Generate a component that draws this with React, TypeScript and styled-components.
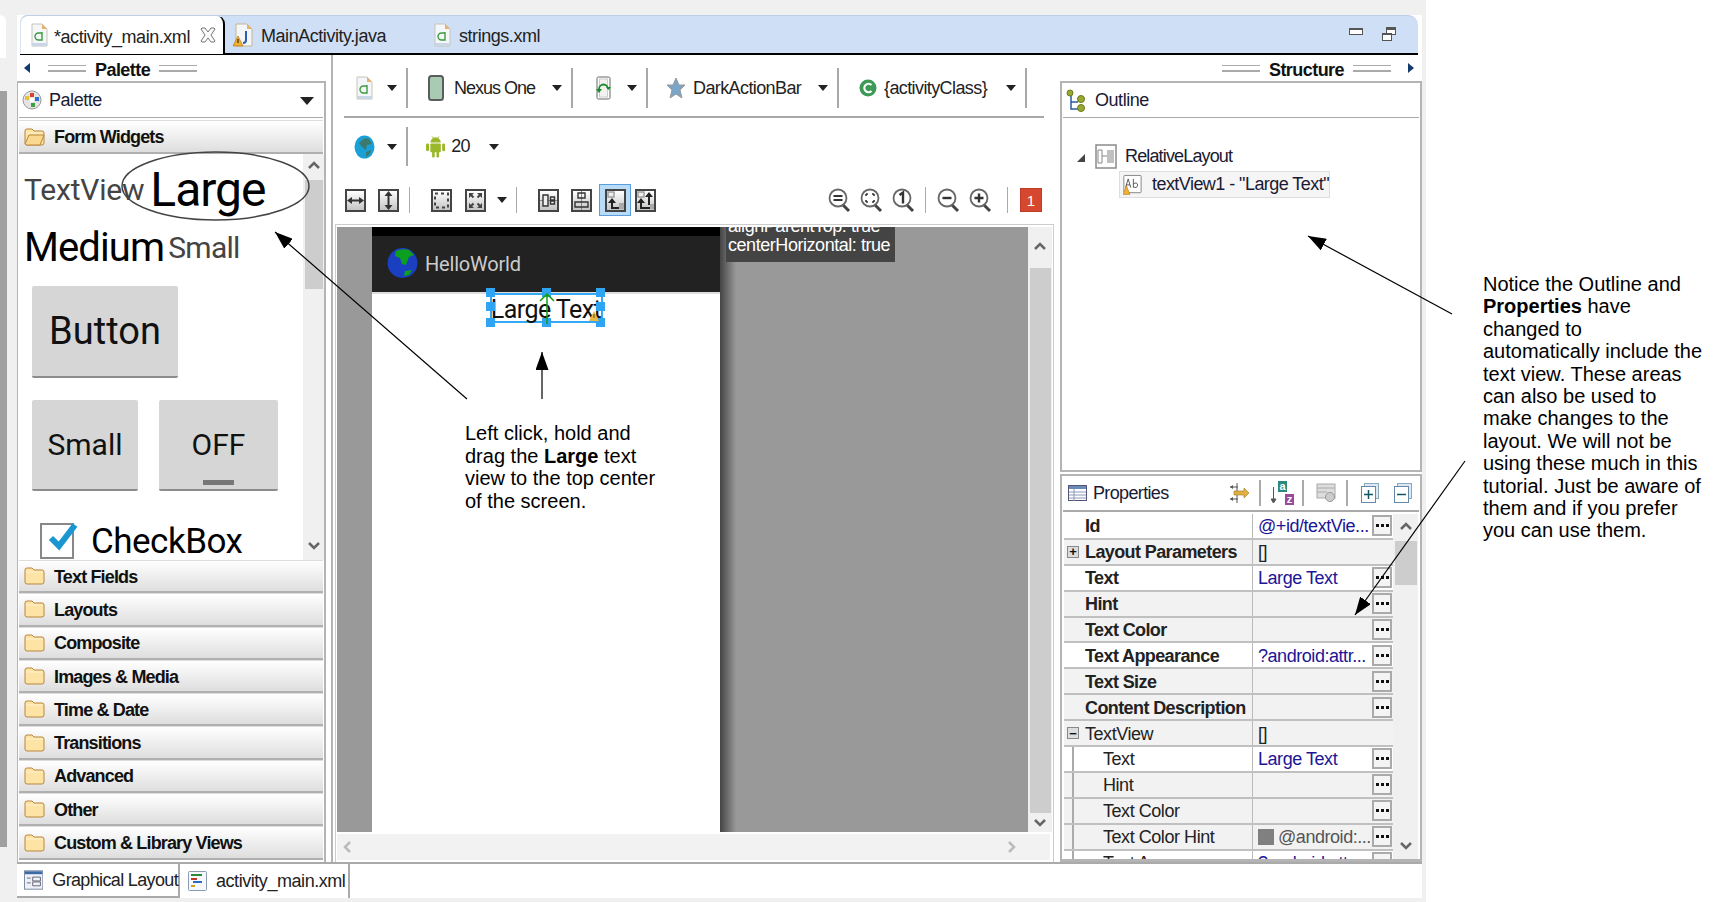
import React from 'react';
import styled, { createGlobalStyle, css } from 'styled-components';

const sections = ['Text Fields', 'Layouts', 'Composite', 'Images & Media', 'Time & Date', 'Transitions', 'Advanced', 'Other', 'Custom & Library Views'];

type Prop = {
  name: string;
  value?: string;
  bold?: boolean;
  nested?: boolean;
  white?: boolean;
  expander?: '+' | '-';
  noButton?: boolean;
  swatch?: boolean;
  plain?: boolean;
};

const properties: Prop[] = [
  { name: 'Id', value: '@+id/textVie...', bold: true, white: true },
  { name: 'Layout Parameters', value: '[]', bold: true, expander: '+', noButton: true, plain: true },
  { name: 'Text', value: 'Large Text', bold: true, white: true },
  { name: 'Hint', bold: true },
  { name: 'Text Color', bold: true },
  { name: 'Text Appearance', value: '?android:attr...', bold: true, white: true },
  { name: 'Text Size', bold: true },
  { name: 'Content Description', bold: true },
  { name: 'TextView', value: '[]', expander: '-', noButton: true, plain: true },
  { name: 'Text', value: 'Large Text', nested: true, white: true },
  { name: 'Hint', nested: true },
  { name: 'Text Color', nested: true },
  { name: 'Text Color Hint', value: '@android:...', nested: true, swatch: true },
  { name: 'Text Appearance', value: '?android:attr...', nested: true, white: true },
];

function XmlFileIcon() {
  return (
    <svg width="17" height="24" viewBox="0 0 17 24">
      <path d="M1 1h10l5 5v17H1z" fill="#f4f7fa" stroke="#c8c4b4" />
      <path d="M11 1l5 5h-5z" fill="#e9b070" />
      <path d="M1 20h15v3H1z" fill="#c9d6e6" />
      <path d="M11 10H7.5a3 3 0 0 0 0 7H11V9" fill="none" stroke="#3d9a3d" strokeWidth="1.4" />
    </svg>
  );
}

function JavaFileIcon() {
  return (
    <svg width="20" height="24" viewBox="0 0 20 24">
      <path d="M3 1h11l5 5v17H3z" fill="#f4f7fa" stroke="#c8b48a" />
      <path d="M14 1l5 5h-5z" fill="#e9b070" />
      <path d="M13 8v9q0 3-3 3" fill="none" stroke="#2a5fb0" strokeWidth="2" />
      <path d="M5 13l5 10H0z" fill="#f0b030" stroke="#b87820" strokeWidth=".7" />
      <path d="M5 16v4" stroke="#5a3a10" strokeWidth="1.4" />
    </svg>
  );
}

function CloseIcon() {
  return (
    <svg width="16" height="16" viewBox="0 0 16 16">
      <path d="M2 1h3l3 4 3-4h3l1 1-4 6 4 6-1 1h-3l-3-4-3 4H2l-1-1 4-6-4-6z" fill="#fafafa" stroke="#777" />
    </svg>
  );
}

function RestoreIcon() {
  return (
    <svg width="14" height="14" viewBox="0 0 14 14">
      <rect x="4.500" y=".5" width="9" height="7" fill="#fff" stroke="#555" />
      <path d="M4 1h10v2H4z" fill="#555" />
      <rect x=".5" y="6.500" width="9" height="7" fill="#fff" stroke="#555" />
      <path d="M0 6h10v2H0z" fill="#555" />
    </svg>
  );
}

function PaletteIcon() {
  return (
    <svg width="20" height="20" viewBox="0 0 20 20">
      <circle cx="10" cy="10" r="9" fill="#e4e4e4" stroke="#999" />
      <rect x="3" y="6" width="4" height="4" fill="#e8c040" />
      <rect x="8" y="3" width="4" height="4" fill="#d84030" />
      <rect x="13" y="7" width="4" height="4" fill="#3070d0" />
      <rect x="9" y="13" width="4" height="4" fill="#40a040" />
      <rect x="8" y="8" width="4" height="4" fill="#fff" />
    </svg>
  );
}

function FolderIcon({ open }: { open?: boolean }) {
  return (
    <svg width="21" height="18" viewBox="0 0 21 18">
      <path d="M1 3q0-2 2-2h5l2 2h8q2 0 2 2v10q0 2-2 2H3q-2 0-2-2z" fill="#fde3a4" stroke="#b9853c" />
      <path d="M2 5h17" stroke="#fff3cf" />
      {open && <path d="M1 16l4-9h15l-4 10H2z" fill="#fbd890" stroke="#b9853c" />}
    </svg>
  );
}

function PhoneIcon() {
  return (
    <svg width="16" height="26" viewBox="0 0 16 26">
      <rect x="1" y="1" width="14" height="24" rx="2.500" fill="#a8cbb4" stroke="#5c5c5c" strokeWidth="2" />
    </svg>
  );
}

function RotateIcon() {
  return (
    <svg width="15" height="24" viewBox="0 0 15 24">
      <rect x="1" y="1" width="13" height="22" rx="1.500" fill="#fff" stroke="#666" />
      <rect x="3.500" y="3" width="8" height="18" fill="#f2f2f2" stroke="#ccc" />
      <path d="M3 13a4.500 4.500 0 0 1 9 0" fill="none" stroke="#1a8a2a" strokeWidth="1.800" />
      <path d="M0 13h6l-3 4zM10 11h5l-2.500 3z" fill="#1a8a2a" />
    </svg>
  );
}

function StarIcon() {
  return (
    <svg width="20" height="22" viewBox="0 0 20 22">
      <path d="M10 1l3 7h6l-5 5 2 8-6-4-6 4 2-8-5-5h6z" fill="#7ba6c8" stroke="#999" />
    </svg>
  );
}

function ClassIcon() {
  return (
    <svg width="18" height="20" viewBox="0 0 18 20">
      <circle cx="9" cy="10" r="8.500" fill="#3c9a55" />
      <path d="M12.500 7a4.200 4.200 0 1 0 0 6" fill="none" stroke="#fff" strokeWidth="2.200" />
    </svg>
  );
}

function ToolGlobe() {
  return (
    <svg width="21" height="24" viewBox="0 0 21 24">
      <ellipse cx="10.500" cy="12" rx="10" ry="11.500" fill="#1aa0d8" />
      <path d="M8 5q4-3 7-1l3 5-5 1-1 5-4-3-3-4zM12 17l5-2-1 4-4 3z" fill="#3c7a70" />
    </svg>
  );
}

function AndroidIcon() {
  return (
    <svg width="22" height="25" viewBox="0 0 22 25">
      <g fill="#9ab82a">
        <path d="M5 8a6 6 0 0 1 12 0z" />
        <path d="M7 1l2 3M15 1l-2 3" stroke="#9ab82a" />
        <rect x="5" y="9" width="12" height="10" rx="1" />
        <rect x="0" y="9" width="3.500" height="9" rx="1.700" />
        <rect x="18.500" y="9" width="3.500" height="9" rx="1.700" />
        <rect x="7" y="18" width="3" height="7" rx="1.400" />
        <rect x="12" y="18" width="3" height="7" rx="1.400" />
      </g>
    </svg>
  );
}

function WorldIcon() {
  return (
    <svg width="31" height="32" viewBox="0 0 31 32">
      <circle cx="15.500" cy="16" r="15" fill="#1a3fc0" />
      <path d="M9 4q6-3 13-1l5 5-5 2-3 8-4-1-2-6-5-2zM18 24l7-1-3 5-5 1z" fill="#0da020" />
    </svg>
  );
}

function FrameGlyph({ kind }: { kind: string }) {
  const s = '#333';
  return (
    <svg width="17" height="19" viewBox="0 0 17 19">
      {kind === 'h' && <path d="M4 9.500h9" stroke={s} strokeWidth="2" />}
      {kind === 'h' && <path d="M0 9.500l5-3.500v7zM17 9.500l-5-3.500v7z" fill={s} />}
      {kind === 'v' && <path d="M8.500 4v11" stroke={s} strokeWidth="2" />}
      {kind === 'v' && <path d="M8.500 0l-4 5h8zM8.500 19l-4-5h8z" fill={s} />}
      {kind === 'dots' && <rect x="2" y="2.500" width="13" height="14" fill="none" stroke="#444" strokeWidth="2" strokeDasharray="3 3" />}
      {kind === 'fit' && <path d="M3 3l3.500 3.500M14 3l-3.500 3.500M3 16l3.500-3.500M14 16l-3.500-3.500" fill="none" stroke="#444" strokeWidth="2" />}
      {kind === 'fit' && <path d="M2 2h5l-5 5zM15 2h-5l5 5zM2 17h5l-5-5zM15 17h-5l5-5z" fill="#444" />}
      {kind === 'row' && <path d="M0 9.500h17" stroke="#888" />}
      {kind === 'row' && <path d="M3 4h5v11H3zM10.500 6h4v3h-4zM10.500 10h4v3h-4z" fill="#eee" stroke="#333" strokeWidth="1.400" />}
      {kind === 'col' && <path d="M8.500 0v19" stroke="#888" />}
      {kind === 'col' && <path d="M5 2h7v5H5zM2 11h13v5H2z" fill="none" stroke="#333" strokeWidth="1.400" />}
      {kind === 'up' && (
        <>
          <rect x="1" y="1" width="6" height="5" fill="#eee" stroke="#999" strokeWidth="1.400" />
          <path d="M5 10v7h8" fill="none" stroke="#222" strokeWidth="2" />
          <path d="M1 12l4-5 4 5z" fill="#222" />
          <rect x="12" y="12" width="5" height="6" fill="#aaa" />
        </>
      )}
      {kind === 'upb' && (
        <>
          <rect x="1" y="1" width="6" height="5" fill="#eee" stroke="#999" strokeWidth="1.400" />
          <path d="M4 11v6h9M12 5v9" fill="none" stroke="#222" strokeWidth="2" />
          <path d="M0 12l4-5 4 5zM8 6l4-5 4 5z" fill="#222" />
          <rect x="13" y="13" width="4" height="5" fill="#aaa" />
        </>
      )}
    </svg>
  );
}

function Magnifier({ glyph }: { glyph: string }) {
  return (
    <svg width="23" height="25" viewBox="0 0 23 25">
      <path d="M15 17l6 6" stroke="#444" strokeWidth="3" />
      <circle cx="10" cy="10" r="8.500" fill="#fff" stroke="#666" strokeWidth="1.800" />
      {glyph === 'eq' && <path d="M5.500 8h9M5.500 12h9" stroke="#333" strokeWidth="2.200" />}
      {glyph === 'fit' && <path d="M6 6h2M12 6h2M6 14h2M12 14h2M6 6v2M14 6v2M6 14v-2M14 14v-2" stroke="#333" strokeWidth="1.600" />}
      {glyph === 'one' && <path d="M7.500 7l3.500-2.500v11" fill="none" stroke="#333" strokeWidth="2.400" />}
      {glyph === 'minus' && <path d="M5.500 10h9" stroke="#333" strokeWidth="2.400" />}
      {glyph === 'plus' && <path d="M5.500 10h9M10 5.500v9" stroke="#333" strokeWidth="2.400" />}
    </svg>
  );
}

function OutlineIcon() {
  return (
    <svg width="20" height="24" viewBox="0 0 20 24">
      <path d="M5 8v13h7M5 14h7" fill="none" stroke="#2a5a9a" strokeWidth="1.500" />
      <g fill="#9aa832" stroke="#6a7a18">
        <circle cx="4" cy="5" r="3" />
        <circle cx="15" cy="11" r="3.500" />
        <circle cx="15" cy="20" r="3.500" />
      </g>
    </svg>
  );
}

function LayoutIcon() {
  return (
    <svg width="22" height="25" viewBox="0 0 22 25">
      <rect x="1" y="1" width="20" height="23" fill="#fff" stroke="#8a8a8a" strokeWidth="1.500" />
      <path d="M3 6h4v13H3zM7 12h5" fill="none" stroke="#888" />
      <rect x="12" y="6" width="7" height="13" fill="#c0c0c0" />
    </svg>
  );
}

function TextViewIcon() {
  return (
    <svg width="22" height="25" viewBox="0 0 22 25">
      <rect x="1" y="2" width="20" height="20" rx="1" fill="#fff" stroke="#777" />
      <path d="M3 16l3-10 3 10M4 13h4M12 6v10M12 12q4-3 5 1-1 5-5 2" fill="none" stroke="#444" />
      <path d="M4 14l4 10H0z" fill="#f0b030" stroke="#b87820" strokeWidth=".7" />
    </svg>
  );
}

function WarnIcon() {
  return (
    <svg width="10" height="10" viewBox="0 0 10 10">
      <path d="M5 0l5 10H0z" fill="#e8b840" />
      <path d="M5 3v4" stroke="#553" />
    </svg>
  );
}

function TableIcon() {
  return (
    <svg width="19" height="16" viewBox="0 0 19 16">
      <rect x=".5" y=".5" width="18" height="15" fill="#fff" stroke="#557" />
      <path d="M1 1h17v3H1z" fill="#6a8ab8" />
      <path d="M1 7h17M1 10h17M1 13h17M6 4v12" stroke="#8a9ab8" />
    </svg>
  );
}

function FilterIcon() {
  return (
    <svg width="21" height="22" viewBox="0 0 21 22">
      <path d="M1 5h8M1 17h8M8 1v8M8 13v8" stroke="#555" />
      <path d="M1 5l3-2v4zM1 17l3-2v4z" fill="#555" />
      <path d="M5 9h10V6l5 5-5 5v-3H5z" fill="#e0b040" stroke="#a07820" strokeWidth=".6" />
    </svg>
  );
}

function SortIcon() {
  return (
    <svg width="23" height="24" viewBox="0 0 23 24">
      <path d="M2.500 6v15M2.500 22l-2.500-4h5z" stroke="#555" fill="#555" />
      <rect x="7" y="0" width="9" height="11" fill="#2a8a80" />
      <rect x="14" y="13" width="9" height="11" fill="#9a4a9a" />
      <text x="11.500" y="9" textAnchor="middle" fontFamily="Liberation Sans" fontWeight="bold" fontSize="11" fill="#fff">a</text>
      <text x="18.500" y="22" textAnchor="middle" fontFamily="Liberation Sans" fontWeight="bold" fontSize="11" fill="#fff">z</text>
    </svg>
  );
}

function AdvancedIcon() {
  return (
    <svg width="20" height="20" viewBox="0 0 20 20">
      <rect x="1" y="1" width="18" height="14" fill="#ddd" stroke="#aaa" />
      <path d="M1 5h18M1 9h10" stroke="#aaa" />
      <circle cx="14" cy="14" r="4.500" fill="#ccc" stroke="#999" />
    </svg>
  );
}

function CollapseIcon({ plus }: { plus?: boolean }) {
  return (
    <svg width="18" height="20" viewBox="0 0 18 20">
      <rect x="3.500" y=".5" width="14" height="15" fill="#dce8f4" stroke="#8ab" />
      <rect x=".5" y="3.500" width="14" height="16" fill="#fff" stroke="#68a" />
      <path d="M3 11.500h9" stroke="#156" strokeWidth="1.500" />
      {plus && <path d="M7.500 7v9" stroke="#156" strokeWidth="1.500" />}
    </svg>
  );
}

function GraphicalIcon() {
  return (
    <svg width="20" height="20" viewBox="0 0 20 20">
      <rect x=".5" y=".5" width="19" height="19" fill="#eef2f8" stroke="#7a8aa0" />
      <path d="M1 1h18v3H1z" fill="#3a6aa8" />
      <path d="M3 8h4M3 13h4M9 7h8v4H9zM9 12h8v4H9z" fill="none" stroke="#667" />
    </svg>
  );
}

function XmlSourceIcon() {
  return (
    <svg width="19" height="20" viewBox="0 0 19 20">
      <rect x=".5" y=".5" width="18" height="19" rx="1" fill="#f6f8fb" stroke="#8a9ab0" />
      <path d="M3 4h11" stroke="#2a8a3a" strokeWidth="2" />
      <path d="M3 8h6" stroke="#c0392b" strokeWidth="2" />
      <path d="M5 11h9" stroke="#2a6ac0" strokeWidth="2" />
      <path d="M3 15h4" stroke="#d0a020" strokeWidth="2" />
    </svg>
  );
}

function Chevron({ dir }: { dir: 'up' | 'down' | 'left' | 'right' }) {
  const paths = { up: 'M1 7l5-5 5 5', down: 'M1 2l5 5 5-5', left: 'M8 1L3 6l5 5', right: 'M3 1l5 5-5 5' };
  return (
    <svg width="12" height="12" viewBox="0 0 12 12">
      <path d={paths[dir]} fill="none" stroke={dir === 'up' || dir === 'down' ? '#666' : '#bbb'} strokeWidth="2.500" />
    </svg>
  );
}

function App() {
  return (
    <Page>
      <GlobalStyle />
      <Workbench>
        <Gutter>
          <GutterCap />
          <GutterStrip />
        </Gutter>
        <Editor>
          <TabBar>
            <ActiveTab>
              <XmlFileIcon />
              <TabLabel $gap={6}>*activity_main.xml</TabLabel>
              <CloseSlot>
                <CloseIcon />
              </CloseSlot>
            </ActiveTab>
            <Tab $width={201}>
              <JavaFileIcon />
              <TabLabel>MainActivity.java</TabLabel>
            </Tab>
            <Tab $width={120}>
              <XmlFileIcon />
              <TabLabel>strings.xml</TabLabel>
            </Tab>
            <WindowButtons>
              <MinimizeBtn />
              <RestoreIcon />
            </WindowButtons>
          </TabBar>

          <Panes>
            <PalettePane>
              <PaneHeader>
                <PaneArrow $left />
                <Grip />
                <PaneTitle>Palette</PaneTitle>
                <Grip />
              </PaneHeader>
              <PaletteBox>
                <ViewHeader>
                  <PaletteIcon />
                  <ViewTitle $gap={7}>Palette</ViewTitle>
                  <MenuArrow />
                </ViewHeader>
                <SectionBar $open>
                  <FolderIcon open />
                  <SectionLabel>Form Widgets</SectionLabel>
                </SectionBar>
                <PaletteScroll>
                  <Widgets>
                    <WidgetRow $top={10} $height={50}>
                      <PreviewText $size={30} $muted $spacing={-0.2} $indent={1}>TextView</PreviewText>
                      <PreviewText $size={48} $spacing={-1} $gap={6}>Large</PreviewText>
                    </WidgetRow>
                    <WidgetRow $top={13} $height={40}>
                      <PreviewText $size={40} $spacing={-0.9} $indent={1}>Medium</PreviewText>
                      <PreviewText $size={30} $muted $spacing={-0.7} $gap={4}>Small</PreviewText>
                    </WidgetRow>
                    <ButtonRow $top={19}>
                      <FakeButton $width={146} $height={92} $size={38}>Button</FakeButton>
                    </ButtonRow>
                    <ButtonRow $top={22}>
                      <FakeButton $width={106} $height={91} $size={30}>Small</FakeButton>
                      <FakeButton $width={119} $height={91} $size={30}>
                        OFF
                        <ToggleBar />
                      </FakeButton>
                    </ButtonRow>
                    <CheckRow>
                      <CheckBox>
                        <svg width="42" height="38" viewBox="0 0 42 38">
                          <path d="M8 19l8 8L32 6" fill="none" stroke="#1a97d0" strokeWidth="6" />
                        </svg>
                      </CheckBox>
                      <PreviewText $size={35} $spacing={-0.5}>CheckBox</PreviewText>
                    </CheckRow>
                  </Widgets>
                  <ScrollTrack $width={21}>
                    <ScrollEnd $height={26}><Chevron dir="up" /></ScrollEnd>
                    <ScrollThumb $height={109} />
                    <ScrollSpacer />
                    <ScrollEnd $height={26}><Chevron dir="down" /></ScrollEnd>
                  </ScrollTrack>
                </PaletteScroll>
                {sections.map((s) => (
                  <SectionBar key={s}>
                    <FolderIcon />
                    <SectionLabel>{s}</SectionLabel>
                  </SectionBar>
                ))}
              </PaletteBox>
            </PalettePane>

            <CenterPane>
              <ToolRow $top={13} $height={40}>
                <ToolGroup $width={64} $pad={12}>
                  <XmlFileIcon />
                  <Drop />
                </ToolGroup>
                <ToolGroup $width={165} $pad={20}>
                  <PhoneIcon />
                  <ToolLabel $gap={10} $spacing={-1}>Nexus One</ToolLabel>
                  <Drop />
                </ToolGroup>
                <ToolGroup $width={75} $pad={23}>
                  <RotateIcon />
                  <Drop />
                </ToolGroup>
                <ToolGroup $width={191} $pad={18}>
                  <StarIcon />
                  <ToolLabel $gap={7}>DarkActionBar</ToolLabel>
                  <Drop />
                </ToolGroup>
                <ToolGroup $width={188} $pad={20}>
                  <ClassIcon />
                  <ToolLabel $gap={7}>{'{activityClass}'}</ToolLabel>
                  <Drop />
                </ToolGroup>
              </ToolRow>
              <ToolDivider />
              <ToolRow $top={9} $height={39}>
                <ToolGroup $width={64} $pad={10}>
                  <ToolGlobe />
                  <Drop />
                </ToolGroup>
                <ToolGroup $width={100} $pad={18} $plain>
                  <AndroidIcon />
                  <ToolLabel $gap={6}>20</ToolLabel>
                  <Drop $gap={19} />
                </ToolGroup>
              </ToolRow>
              <ActionRow>
                <FrameButton $gap={12}><FrameGlyph kind="h" /></FrameButton>
                <FrameButton $gap={12}><FrameGlyph kind="v" /></FrameButton>
                <ActionSep $gap={10} />
                <FrameButton $gap={21}><FrameGlyph kind="dots" /></FrameButton>
                <FrameButton $gap={13}><FrameGlyph kind="fit" /></FrameButton>
                <Drop $gap={11} />
                <ActionSep $gap={9} />
                <FrameButton $gap={21}><FrameGlyph kind="row" /></FrameButton>
                <FrameButton $gap={12}><FrameGlyph kind="col" /></FrameButton>
                <Highlight>
                  <FrameButton $gap={0}><FrameGlyph kind="up" /></FrameButton>
                </Highlight>
                <FrameButton $gap={4}><FrameGlyph kind="upb" /></FrameButton>
                <ZoomGroup>
                  <Magnifier glyph="eq" />
                  <Magnifier glyph="fit" />
                  <Magnifier glyph="one" />
                  <ActionSep $gap={1} $after={2} />
                  <Magnifier glyph="minus" />
                  <Magnifier glyph="plus" />
                  <ActionSep $gap={6} />
                  <ErrorBadge>1</ErrorBadge>
                </ZoomGroup>
              </ActionRow>

              <CanvasFrame>
                <CanvasRow>
                  <Viewport>
                    <Device>
                      <StatusBar />
                      <ActionBar>
                        <WorldIcon />
                        <AppTitle>HelloWorld</AppTitle>
                      </ActionBar>
                      <DeviceBody>
                        <Selection>
                          <SelectedText>Large Text</SelectedText>
                          <Handle $x="left" $y="top" />
                          <Handle $x="center" $y="top" />
                          <Handle $x="right" $y="top" />
                          <Handle $x="left" $y="middle" />
                          <Handle $x="right" $y="middle" />
                          <Handle $x="left" $y="bottom" />
                          <Handle $x="center" $y="bottom" />
                          <Handle $x="right" $y="bottom" />
                          <GuideArrow viewBox="0 0 16 32" width="16" height="32">
                            <path d="M8 32V2M1 9l7-7 7 7" fill="none" stroke="#12a012" strokeWidth="1.500" />
                          </GuideArrow>
                          <SelectionWarn><WarnIcon /></SelectionWarn>
                        </Selection>
                      </DeviceBody>
                    </Device>
                    <DeviceShadow />
                    <Tip>
                      <TipCut>alignParentTop: true</TipCut>
                      <TipLine>centerHorizontal: true</TipLine>
                    </Tip>
                  </Viewport>
                  <ScrollTrack $width={24}>
                    <ScrollEnd $height={41}><Chevron dir="up" /></ScrollEnd>
                    <ScrollThumb $height={545} />
                    <ScrollSpacer />
                    <ScrollEnd $height={22}><Chevron dir="down" /></ScrollEnd>
                  </ScrollTrack>
                </CanvasRow>
                <HScroll>
                  <Chevron dir="left" />
                  <Chevron dir="right" />
                </HScroll>
              </CanvasFrame>
            </CenterPane>

            <RightPane>
              <PaneHeader $right>
                <Grip />
                <PaneTitle>Structure</PaneTitle>
                <Grip />
                <PaneArrow />
              </PaneHeader>
              <OutlineBox>
                <ViewHeader>
                  <OutlineIcon />
                  <ViewTitle>Outline</ViewTitle>
                </ViewHeader>
                <Tree>
                  <TreeRow>
                    <TreeToggle />
                    <LayoutIcon />
                    <TreeLabel $spacing={-0.85}>RelativeLayout</TreeLabel>
                  </TreeRow>
                  <TreeChild>
                    <TextViewIcon />
                    <TreeLabel $gap={10} $spacing={-0.55}>textView1 - "Large Text"</TreeLabel>
                  </TreeChild>
                </Tree>
              </OutlineBox>
              <PropertiesBox>
                <PropHeader>
                  <TableIcon />
                  <ViewTitle $gap={6} $spacing={-0.65}>Properties</ViewTitle>
                  <PropTools>
                    <FilterIcon />
                    <ToolSep $left={9} $right={10} />
                    <SortIcon />
                    <ToolSep $left={8} $right={12} />
                    <AdvancedIcon />
                    <ToolSep $left={10} $right={13} />
                    <CollapseIcon plus />
                    <CollapseGap />
                    <CollapseIcon />
                  </PropTools>
                </PropHeader>
                <PropBody>
                  <PropTable>
                    {properties.map((p, i) => (
                      <PropRow key={i} $white={p.white}>
                        <NameCell $bold={p.bold} $nested={p.nested}>
                          {p.expander && <Expander>{p.expander === '+' ? '+' : '−'}</Expander>}
                          {p.name}
                        </NameCell>
                        <ValueCell>
                          {p.swatch && <Swatch />}
                          <ValueText $plain={p.plain} $muted={p.swatch}>{p.value}</ValueText>
                          {!p.noButton && (
                            <DotsButton>
                              <Dots />
                            </DotsButton>
                          )}
                        </ValueCell>
                      </PropRow>
                    ))}
                  </PropTable>
                  <ScrollTrack $width={25}>
                    <ScrollEnd $height={27}><Chevron dir="up" /></ScrollEnd>
                    <ScrollThumb $height={44} />
                    <ScrollSpacer />
                    <ScrollEnd $height={24}><Chevron dir="down" /></ScrollEnd>
                  </ScrollTrack>
                </PropBody>
              </PropertiesBox>
            </RightPane>
          </Panes>

          <BottomTabs>
            <BottomTab $active $width={163}>
              <GraphicalIcon />
              <BottomLabel $spacing={-0.65}>Graphical Layout</BottomLabel>
            </BottomTab>
            <BottomTab $width={170}>
              <XmlSourceIcon />
              <BottomLabel>activity_main.xml</BottomLabel>
            </BottomTab>
          </BottomTabs>
        </Editor>
      </Workbench>

      <SideNote>
        Notice the Outline and
        <br />
        <b>Properties</b> have
        <br />
        changed to
        <br />
        automatically include the
        <br />
        text view. These areas
        <br />
        can also be used to
        <br />
        make changes to the
        <br />
        layout. We will not be
        <br />
        using these much in this
        <br />
        tutorial. Just be aware of
        <br />
        them and if you prefer
        <br />
        you can use them.
      </SideNote>

      <DragNote>
        Left click, hold and
        <br />
        drag the <b>Large</b> text
        <br />
        view to the top center
        <br />
        of the screen.
      </DragNote>

      <Annotations viewBox="0 0 1714 902">
        <defs>
          <marker id="head" markerWidth="18" markerHeight="13" refX="18" refY="6.500" orient="auto" markerUnits="userSpaceOnUse">
            <path d="M0 0L18 6.500L0 13z" fill="#000" />
          </marker>
        </defs>
        <ellipse cx="215.500" cy="186" rx="93.500" ry="34" fill="none" stroke="#444" strokeWidth="1.500" />
        <line x1="467" y1="399" x2="275" y2="232" stroke="#000" strokeWidth="1.200" markerEnd="url(#head)" />
        <line x1="542" y1="399" x2="542" y2="352" stroke="#000" strokeWidth="1.200" markerEnd="url(#head)" />
        <line x1="1452" y1="314" x2="1308" y2="236" stroke="#000" strokeWidth="1.200" markerEnd="url(#head)" />
        <line x1="1465" y1="461" x2="1355" y2="615" stroke="#000" strokeWidth="1.200" markerEnd="url(#head)" />
      </Annotations>
    </Page>
  );
}

export default App;

const uiText = css`
  font-family: 'Liberation Sans', Arial, sans-serif;
  font-size: 18px;
  letter-spacing: -0.45px;
  white-space: nowrap;
  padding-top: 2px;
`;

const GlobalStyle = createGlobalStyle`
  html, body {
    margin: 0;
    padding: 0;
    background: #fff;
  }
  body {
    font-family: 'Liberation Sans', Arial, sans-serif;
    color: #111;
    overflow: hidden;
  }
  #root {
    width: 1714px;
    height: 902px;
  }
  * {
    box-sizing: border-box;
  }
`;

const Page = styled.div`
  position: relative;
  display: flex;
  width: 1714px;
  height: 902px;
  background: #fff;
  overflow: hidden;
`;

const Workbench = styled.div`
  display: flex;
  width: 1426px;
  height: 902px;
  padding: 15px 4px 4px 0;
  background: #f0f0f0;
`;

const Gutter = styled.div`
  display: flex;
  flex-direction: column;
  width: 17px;
  flex: none;
`;

const GutterCap = styled.div`
  width: 6px;
  height: 43px;
  background: #fff;
  border-top-right-radius: 6px;
`;

const GutterStrip = styled.div`
  width: 7px;
  height: 756px;
  margin-top: 33px;
  background: #a0a0a0;
`;

const Editor = styled.div`
  display: flex;
  flex-direction: column;
  width: 1405px;
  flex: none;
  background: #fff;
`;

const TabBar = styled.div`
  display: flex;
  height: 40px;
  flex: none;
  margin: 0 4px 0 3px;
  background: #cfe0f6;
  border-top: 1px solid #bccde8;
  border-bottom: 2px solid #000;
  border-radius: 8px 10px 0 0;
`;

const ActiveTab = styled.div`
  display: flex;
  align-items: center;
  width: 205px;
  height: 39px;
  padding-left: 10px;
  margin-top: -1px;
  background: #fff;
  border-top: 1px solid #c0cfe6;
  border-left: 1px solid #d8e2f0;
  border-right: 2px solid #000;
  border-radius: 8px 9px 0 0;
`;

const Tab = styled.div<{ $width: number }>`
  display: flex;
  align-items: center;
  width: ${(p) => p.$width}px;
  padding-left: 8px;
`;

const TabLabel = styled.span<{ $gap?: number }>`
  ${uiText}
  padding-top: 4px;
  margin-left: ${(p) => p.$gap ?? 8}px;
  color: #222;
`;

const CloseSlot = styled.span`
  display: flex;
  margin-left: auto;
  margin-right: 7px;
`;

const WindowButtons = styled.div`
  display: flex;
  align-items: flex-start;
  gap: 19px;
  margin-left: auto;
  padding: 11px 22px 0 0;
`;

const MinimizeBtn = styled.span`
  width: 14px;
  height: 7px;
  margin-top: 1px;
  background: #fff;
  border: 1px solid #555;
  border-top-width: 2px;
`;

const Panes = styled.div`
  display: flex;
  height: 807px;
  flex: none;
`;

const PalettePane = styled.div`
  display: flex;
  flex-direction: column;
  width: 316px;
  flex: none;
  border-right: 2px solid #b4b4b4;
`;

const PaneHeader = styled.div<{ $right?: boolean }>`
  display: flex;
  align-items: center;
  justify-content: ${(p) => (p.$right ? 'flex-end' : 'flex-start')};
  gap: 9px;
  width: ${(p) => (p.$right ? '362px' : '309px')};
  height: 26px;
  flex: none;
  padding: ${(p) => (p.$right ? '0 8px 0 0' : '0 0 0 7px')};
`;

const PaneArrow = styled.span<{ $left?: boolean }>`
  width: 0;
  height: 0;
  margin: ${(p) => (p.$left ? '0 9px 0 0' : '0 0 0 8px')};
  border-top: 5px solid transparent;
  border-bottom: 5px solid transparent;
  ${(p) => (p.$left ? 'border-right: 6px solid #123a6a;' : 'border-left: 6px solid #123a6a;')}
`;

const Grip = styled.span`
  width: 38px;
  height: 7px;
  border-top: 1px solid #aaa;
  border-bottom: 2px solid #aaa;
`;

const PaneTitle = styled.span`
  ${uiText}
  padding-top: 4px;
  font-weight: bold;
  letter-spacing: -0.55px;
`;

const PaletteBox = styled.div`
  display: flex;
  flex-direction: column;
  width: 309px;
  flex: 1;
  border: 2px solid #b4b4b4;
  border-left-width: 1px;
  border-bottom-width: 0;
`;

const ViewHeader = styled.div`
  display: flex;
  align-items: center;
  height: 35px;
  flex: none;
  padding-left: 3px;
  margin: 0 1px;
  border-bottom: 1px solid #aaa;
`;

const ViewTitle = styled.span<{ $gap?: number; $spacing?: number }>`
  ${uiText}
  padding-top: 0;
  margin-left: ${(p) => p.$gap ?? 9}px;
  letter-spacing: ${(p) => p.$spacing ?? -0.45}px;
  color: #1a1a33;
`;

const MenuArrow = styled.span`
  width: 0;
  height: 0;
  margin: 2px 9px 0 auto;
  border-left: 7px solid transparent;
  border-right: 7px solid transparent;
  border-top: 8px solid #222;
`;

const SectionBar = styled.div<{ $open?: boolean }>`
  display: flex;
  align-items: center;
  height: ${(p) => (p.$open ? '34px' : '33.3px')};
  flex: none;
  padding-left: 5px;
  margin: ${(p) => (p.$open ? '2px 1px 0' : '0 1px')};
  background: linear-gradient(#fff, #dedede);
  border-top: 1px solid #ddd;
  border-bottom: 2px solid #b0b0b0;
`;

const SectionLabel = styled.span`
  ${uiText}
  margin-left: 9px;
  font-weight: bold;
  letter-spacing: -0.85px;
`;

const PaletteScroll = styled.div`
  display: flex;
  height: 406px;
  flex: none;
  overflow: hidden;
`;

const Widgets = styled.div`
  flex: 1;
  padding-left: 5px;
  overflow: hidden;
`;

const WidgetRow = styled.div<{ $top: number; $height: number }>`
  display: flex;
  align-items: center;
  height: ${(p) => p.$height}px;
  margin-top: ${(p) => p.$top}px;
`;

const PreviewText = styled.span<{ $size: number; $muted?: boolean; $spacing?: number; $gap?: number; $indent?: number }>`
  font-family: Roboto, 'Liberation Sans', sans-serif;
  font-size: ${(p) => p.$size}px;
  letter-spacing: ${(p) => p.$spacing ?? 0}px;
  margin-left: ${(p) => (p.$gap ?? 0) + (p.$indent ?? 0)}px;
  color: ${(p) => (p.$muted ? '#444' : '#000')};
  white-space: nowrap;
`;

const ButtonRow = styled.div<{ $top: number }>`
  display: flex;
  gap: 21px;
  margin: ${(p) => p.$top}px 0 0 9px;
`;

const FakeButton = styled.div<{ $width: number; $height: number; $size: number }>`
  position: relative;
  display: flex;
  align-items: center;
  justify-content: center;
  width: ${(p) => p.$width}px;
  height: ${(p) => p.$height}px;
  font-family: Roboto, 'Liberation Sans', sans-serif;
  font-size: ${(p) => p.$size}px;
  color: #111;
  background: #d6d6d6;
  border-radius: 2px;
  border-bottom: 2px solid #8c8c8c;
`;

const ToggleBar = styled.span`
  position: absolute;
  left: 44px;
  bottom: 4px;
  width: 31px;
  height: 5px;
  background: #777;
`;

const CheckRow = styled.div`
  display: flex;
  align-items: center;
  gap: 17px;
  height: 36px;
  margin: 32px 0 0 17px;
`;

const CheckBox = styled.span`
  position: relative;
  flex: none;
  width: 34px;
  height: 36px;
  border: 2px solid #888;
  & > svg {
    position: absolute;
    left: 1px;
    top: -6px;
  }
`;

const ScrollTrack = styled.div<{ $width: number }>`
  display: flex;
  flex-direction: column;
  width: ${(p) => p.$width}px;
  flex: none;
  background: #f0f0f0;
`;

const ScrollEnd = styled.div<{ $height: number }>`
  display: flex;
  align-items: center;
  justify-content: center;
  height: ${(p) => p.$height}px;
  flex: none;
`;

const ScrollThumb = styled.div<{ $height: number }>`
  height: ${(p) => p.$height}px;
  flex: none;
  margin: 0 1px 0 2px;
  background: #cdcdcd;
`;

const ScrollSpacer = styled.div`
  flex: 1;
`;

const CenterPane = styled.div`
  display: flex;
  flex-direction: column;
  width: 727px;
  flex: none;
`;

const ToolRow = styled.div<{ $top: number; $height: number }>`
  display: flex;
  height: ${(p) => p.$height}px;
  flex: none;
  margin: ${(p) => p.$top}px 0 0 11px;
`;

const ToolGroup = styled.div<{ $width: number; $pad: number; $plain?: boolean }>`
  display: flex;
  align-items: center;
  width: ${(p) => p.$width}px;
  padding-left: ${(p) => p.$pad}px;
  border-right: ${(p) => (p.$plain ? 'none' : '2px solid #a8a8a8')};
`;

const ToolLabel = styled.span<{ $gap: number; $spacing?: number }>`
  ${uiText}
  padding-top: 0;
  letter-spacing: ${(p) => p.$spacing ?? -0.6}px;
  margin-left: ${(p) => p.$gap}px;
  color: #222;
`;

const Drop = styled.span<{ $gap?: number }>`
  width: 0;
  height: 0;
  flex: none;
  margin-left: ${(p) => (p.$gap ? `${p.$gap}px` : 'auto')};
  margin-right: ${(p) => (p.$gap && p.$gap < 15 ? '0' : '9px')};
  border-left: 5px solid transparent;
  border-right: 5px solid transparent;
  border-top: 6px solid #222;
`;

const ToolDivider = styled.div`
  height: 2px;
  flex: none;
  margin: 8px 16px 0 11px;
  background: #a8a8a8;
`;

const ActionRow = styled.div`
  display: flex;
  align-items: center;
  height: 30px;
  flex: none;
  margin-top: 19px;
`;

const FrameButton = styled.span<{ $gap: number }>`
  display: flex;
  align-items: center;
  justify-content: center;
  flex: none;
  width: 21px;
  height: 23px;
  margin-left: ${(p) => p.$gap}px;
  background: linear-gradient(#fff, #c4c4c4);
  border: 2px solid #444;
`;

const ActionSep = styled.span<{ $gap: number; $after?: number }>`
  width: 1px;
  height: 26px;
  flex: none;
  margin-left: ${(p) => p.$gap}px;
  margin-right: ${(p) => p.$after ?? 0}px;
  background: #aaa;
`;

const Highlight = styled.span`
  display: flex;
  align-items: center;
  justify-content: center;
  flex: none;
  width: 32px;
  height: 32px;
  margin-left: 7px;
  background: #b8dcf8;
  border: 1px solid #5a9ee0;
`;

const ZoomGroup = styled.div`
  display: flex;
  align-items: center;
  gap: 9px;
  margin-left: 172px;
`;

const ErrorBadge = styled.span`
  display: flex;
  align-items: center;
  justify-content: center;
  width: 22px;
  height: 24px;
  margin-left: 3px;
  font-family: 'Liberation Sans', Arial, sans-serif;
  font-size: 15px;
  color: #ffe;
  background: #d6472f;
  border: 1px solid #c03c26;
`;

const CanvasFrame = styled.div`
  display: flex;
  flex-direction: column;
  flex: 1;
  width: 719px;
  margin: 9px 0 0 2px;
  padding: 2px 1px 0;
  border: 1px solid #ccc;
  border-bottom: none;
`;

const CanvasRow = styled.div`
  display: flex;
  height: 605px;
  flex: none;
`;

const Viewport = styled.div`
  position: relative;
  display: flex;
  flex: 1;
  padding-left: 35px;
  background: #999;
  overflow: hidden;
`;

const Device = styled.div`
  display: flex;
  flex-direction: column;
  width: 348px;
  flex: none;
`;

const StatusBar = styled.div`
  height: 9px;
  flex: none;
  background: #000;
`;

const ActionBar = styled.div`
  display: flex;
  align-items: center;
  height: 58px;
  flex: none;
  padding: 0 0 3px 15px;
  background: #222;
  border-bottom: 2px solid #ddd;
`;

const AppTitle = styled.span`
  font-family: Roboto, 'Liberation Sans', sans-serif;
  font-size: 20px;
  letter-spacing: -0.2px;
  padding-top: 3px;
  margin-left: 7px;
  color: #ccc;
`;

const DeviceBody = styled.div`
  display: flex;
  justify-content: center;
  flex: 1;
  background: #fff;
`;

const Selection = styled.div`
  position: relative;
  display: flex;
  align-items: center;
  justify-content: center;
  width: 113px;
  height: 30px;
  margin-top: -1px;
  border: 2px solid #35a8f5;
`;

const SelectedText = styled.span`
  font-family: Roboto, 'Liberation Sans', sans-serif;
  font-size: 25px;
  letter-spacing: -0.55px;
  padding-top: 2px;
  color: #111;
  white-space: nowrap;
`;

const Handle = styled.span<{ $x: string; $y: string }>`
  position: absolute;
  width: 9px;
  height: 9px;
  background: #2fa4f3;
  left: ${(p) => (p.$x === 'left' ? '-6px' : p.$x === 'center' ? '50px' : 'auto')};
  right: ${(p) => (p.$x === 'right' ? '-4px' : 'auto')};
  top: ${(p) => (p.$y === 'top' ? '-7px' : p.$y === 'middle' ? '7px' : 'auto')};
  bottom: ${(p) => (p.$y === 'bottom' ? '-6px' : 'auto')};
`;

const GuideArrow = styled.svg`
  position: absolute;
  left: 47px;
  top: -3px;
`;

const SelectionWarn = styled.span`
  position: absolute;
  display: flex;
  right: 2px;
  bottom: 0;
`;

const DeviceShadow = styled.div`
  width: 16px;
  flex: none;
  background: linear-gradient(90deg, #444, #999);
`;

const Tip = styled.div`
  position: absolute;
  top: 0;
  left: 389px;
  width: 169px;
  height: 35px;
  padding-left: 2px;
  color: #fff;
  background: #444;
  overflow: hidden;
`;

const TipCut = styled.div`
  ${uiText}
  height: 6px;
  padding-top: 0;
  margin-top: -1px;
  line-height: 0;
`;

const TipLine = styled.div`
  ${uiText}
  padding-top: 1px;
  line-height: 24px;
`;

const HScroll = styled.div`
  display: flex;
  align-items: center;
  justify-content: space-between;
  height: 26px;
  flex: none;
  padding: 0 32px 0 5px;
  margin-top: 2px;
  margin-right: 2px;
  background: #f2f2f2;
`;

const RightPane = styled.div`
  display: flex;
  flex-direction: column;
  width: 362px;
  flex: none;
`;

const OutlineBox = styled.div`
  display: flex;
  flex-direction: column;
  height: 391px;
  flex: none;
  border: 2px solid #b4b4b4;
  border-bottom: 2px solid #b4b4b4;
`;

const Tree = styled.div`
  padding: 26px 0 0 14px;
`;

const TreeRow = styled.div`
  display: flex;
  align-items: center;
  height: 25px;
`;

const TreeToggle = styled.span`
  width: 0;
  height: 0;
  margin: 2px 10px 0 1px;
  border-bottom: 8px solid #444;
  border-left: 8px solid transparent;
`;

const TreeLabel = styled.span<{ $gap?: number; $spacing?: number }>`
  ${uiText}
  padding-top: 0;
  margin-left: ${(p) => p.$gap ?? 8}px;
  letter-spacing: ${(p) => p.$spacing ?? -0.45}px;
  color: #1a1a33;
`;

const TreeChild = styled.div`
  display: flex;
  align-items: center;
  width: 211px;
  height: 27px;
  margin: 2px 0 0 43px;
  padding-left: 3px;
  background: #f5f5f5;
  border: 1px solid #ddd;
`;

const PropertiesBox = styled.div`
  display: flex;
  flex-direction: column;
  flex: 1;
  min-height: 0;
  margin-top: 2px;
  border: 2px solid #b4b4b4;
  border-bottom: 3px solid #b4b4b4;
`;

const PropHeader = styled.div`
  display: flex;
  align-items: center;
  height: 36px;
  flex: none;
  padding-left: 5px;
  margin: 0 1px;
  border-bottom: 2px solid #aaa;
`;

const PropTools = styled.div`
  display: flex;
  align-items: center;
  margin-left: auto;
  padding-right: 7px;
`;

const ToolSep = styled.span<{ $left: number; $right: number }>`
  width: 2px;
  height: 26px;
  margin: 0 ${(p) => p.$right}px 0 ${(p) => p.$left}px;
  background: #aaa;
`;

const CollapseGap = styled.span`
  width: 15px;
`;

const PropBody = styled.div`
  display: flex;
  flex: 1;
  min-height: 0;
  padding: 2px 2px 0 2px;
  overflow: hidden;
`;

const PropTable = styled.div`
  width: 329px;
  flex: none;
  overflow: hidden;
`;

const PropRow = styled.div<{ $white?: boolean }>`
  display: flex;
  height: 25.9px;
  border-bottom: 2px solid #c0c0c0;
  background: ${(p) => (p.$white ? '#fff' : '#f2f2f2')};
`;

const NameCell = styled.div<{ $bold?: boolean; $nested?: boolean }>`
  ${uiText}
  position: relative;
  display: flex;
  align-items: center;
  width: 189px;
  flex: none;
  padding-left: ${(p) => (p.$nested ? '39px' : '21px')};
  font-weight: ${(p) => (p.$bold ? 'bold' : 'normal')};
  letter-spacing: ${(p) => (p.$bold ? '-0.6px' : '-0.45px')};
  color: #222;
  border-right: 1px solid #bbb;
  ${(p) => p.$nested && 'background: linear-gradient(#aaa, #aaa) 8px 0 / 2px 100% no-repeat;'}
`;

const Expander = styled.span`
  position: absolute;
  left: 3px;
  top: 6px;
  display: flex;
  align-items: center;
  justify-content: center;
  width: 12px;
  height: 12px;
  font-size: 13px;
  font-weight: bold;
  letter-spacing: 0;
  color: #111;
  background: #ddd;
  border: 1px solid #888;
`;

const ValueCell = styled.div`
  ${uiText}
  position: relative;
  display: flex;
  align-items: center;
  flex: 1;
  padding: 0 1px 0 5px;
`;

const ValueText = styled.span<{ $plain?: boolean; $muted?: boolean }>`
  padding-top: 2px;
  color: ${(p) => (p.$plain ? '#222' : p.$muted ? '#555' : '#1c1596')};
`;

const Swatch = styled.span`
  width: 16px;
  height: 16px;
  flex: none;
  margin-right: 4px;
  background: #808080;
`;

const DotsButton = styled.span`
  display: flex;
  align-items: center;
  justify-content: center;
  width: 20px;
  height: 21px;
  margin-left: auto;
  background: #f4f4f4;
  border: 2px solid #aaa;
`;

const Dots = styled.span`
  width: 3px;
  height: 3px;
  background: #111;
  box-shadow: -5px 0 0 #111, 5px 0 0 #111;
`;

const BottomTabs = styled.div`
  display: flex;
  height: 36px;
  flex: none;
  border-top: 2px solid #aaa;
`;

const BottomTab = styled.div<{ $active?: boolean; $width: number }>`
  display: flex;
  align-items: center;
  width: ${(p) => p.$width}px;
  padding-left: ${(p) => (p.$active ? '7px' : '8px')};
  border-right: 2px solid #aaa;
  ${(p) => p.$active && 'border-bottom: 2px solid #aaa;'}
`;

const BottomLabel = styled.span<{ $spacing?: number }>`
  ${uiText}
  padding-top: 0;
  margin-left: 9px;
  letter-spacing: ${(p) => p.$spacing ?? -0.45}px;
  color: #222;
`;

const SideNote = styled.div`
  width: 288px;
  padding: 273px 0 0 57px;
  font-family: 'Liberation Sans', Arial, sans-serif;
  font-size: 20px;
  line-height: 22.4px;
  color: #000;
  white-space: nowrap;
`;

const DragNote = styled.div`
  position: absolute;
  left: 465px;
  top: 422px;
  font-family: 'Liberation Sans', Arial, sans-serif;
  font-size: 20px;
  line-height: 22.6px;
  color: #000;
  white-space: nowrap;
`;

const Annotations = styled.svg`
  position: absolute;
  left: 0;
  top: 0;
  width: 1714px;
  height: 902px;
  pointer-events: none;
`;
